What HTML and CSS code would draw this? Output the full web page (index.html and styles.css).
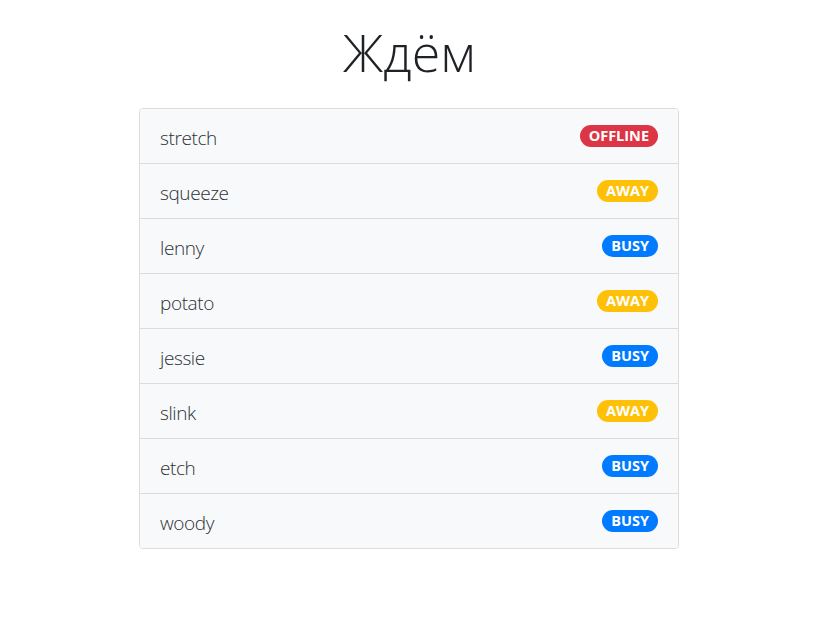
FILE: index.html
```html
<!DOCTYPE html>
<html lang="ru">
<head>
<meta charset="utf-8">
<title>Ждём</title>
<link rel="stylesheet" href="styles.css">
</head>
<body>
<main class="wrap">
  <h1 class="title">Ждём</h1>
  <ul class="list">
    <li class="item"><span class="name">stretch</span><span class="badge red">OFFLINE</span></li>
    <li class="item"><span class="name">squeeze</span><span class="badge yellow">AWAY</span></li>
    <li class="item"><span class="name">lenny</span><span class="badge blue">BUSY</span></li>
    <li class="item"><span class="name">potato</span><span class="badge yellow">AWAY</span></li>
    <li class="item"><span class="name">jessie</span><span class="badge blue">BUSY</span></li>
    <li class="item"><span class="name">slink</span><span class="badge yellow">AWAY</span></li>
    <li class="item"><span class="name">etch</span><span class="badge blue">BUSY</span></li>
    <li class="item"><span class="name">woody</span><span class="badge blue">BUSY</span></li>
  </ul>
</main>
</body>
</html>
```

FILE: styles.css
```css
html, body {
  margin: 0;
  padding: 0;
  background: #fff;
}
body {
  font-family: "Open Sans", "Noto Sans", sans-serif;
  color: #212529;
}
.wrap {
  width: 540px;
  margin: 0 0 0 139px;
  padding-top: 18px;
}
.title {
  margin: 0 0 23px;
  text-align: center;
  font-size: 52px;
  font-weight: 300;
  line-height: 67px;
  color: #1e2125;
}
.list {
  list-style: none;
  margin: 0;
  padding: 0;
  border: 1px solid #dcdcdd;
  border-radius: 4px;
  overflow: hidden;
}
.item {
  display: flex;
  align-items: center;
  justify-content: space-between;
  height: 54px;
  padding: 0 20px;
  background: #f8f9fa;
  border-top: 1px solid #dcdcdd;
}
.item:first-child {
  border-top: 0;
}
.name {
  padding-top: 4px;
  font-size: 19px;
  font-weight: 300;
  letter-spacing: -0.4px;
  color: #2b3036;
}
.badge {
  display: inline-block;
  height: 22px;
  line-height: 22px;
  padding: 0 9px;
  border-radius: 11px;
  font-size: 14.5px;
  font-weight: 700;
  color: #fff;
}
.red { background: #dc3545; }
.yellow { background: #ffc107; }
.blue { background: #007bff; }
```
